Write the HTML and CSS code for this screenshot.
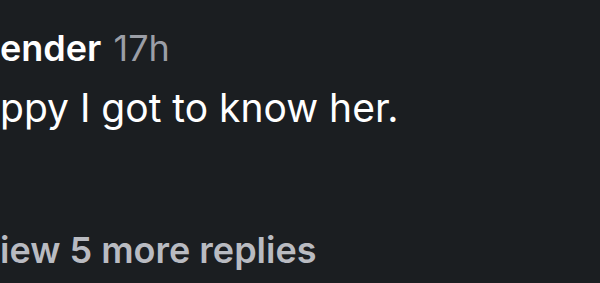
FILE: index.html
```html
<!DOCTYPE html>
<html lang="en">
<head>
  <meta charset="UTF-8" />
  <meta name="viewport" content="width=device-width, initial-scale=1.0"/>
  <title>Comment</title>
  <link rel="stylesheet" href="styles.css">
</head>
<body>
  <div class="comment">
    <div class="comment-head">
      <span class="author">ender</span>
      <span class="time">17h</span>
    </div>
    <p class="comment-text">ppy I got to know her.</p>
    <a class="more-replies" href="#">iew 5 more replies</a>
  </div>
</body>
</html>
```

FILE: styles.css
```css
body {
  font-family: Inter, "Noto Sans", sans-serif;
  background: #1b1e21;
  margin: 0;
  padding: 0;
  height: 283px;
  overflow: hidden;
}

.comment {
  display: flex;
  flex-direction: column;
  align-items: flex-start;
  padding: 26px 0 0 0;
}

.comment-head {
  font-size: 36px;
  line-height: 44px;
}

.author {
  color: #ffffff;
  font-weight: 600;
}

.time {
  color: #9b9ea6;
  margin-left: 2px;
}

.comment-text {
  margin: 14px 0 0 0;
  color: #ffffff;
  font-size: 39px;
  line-height: 48px;
}

.more-replies {
  margin-top: 96px;
  color: #b9bbc1;
  font-size: 36px;
  line-height: 44px;
  font-weight: 600;
  text-decoration: none;
}
```
